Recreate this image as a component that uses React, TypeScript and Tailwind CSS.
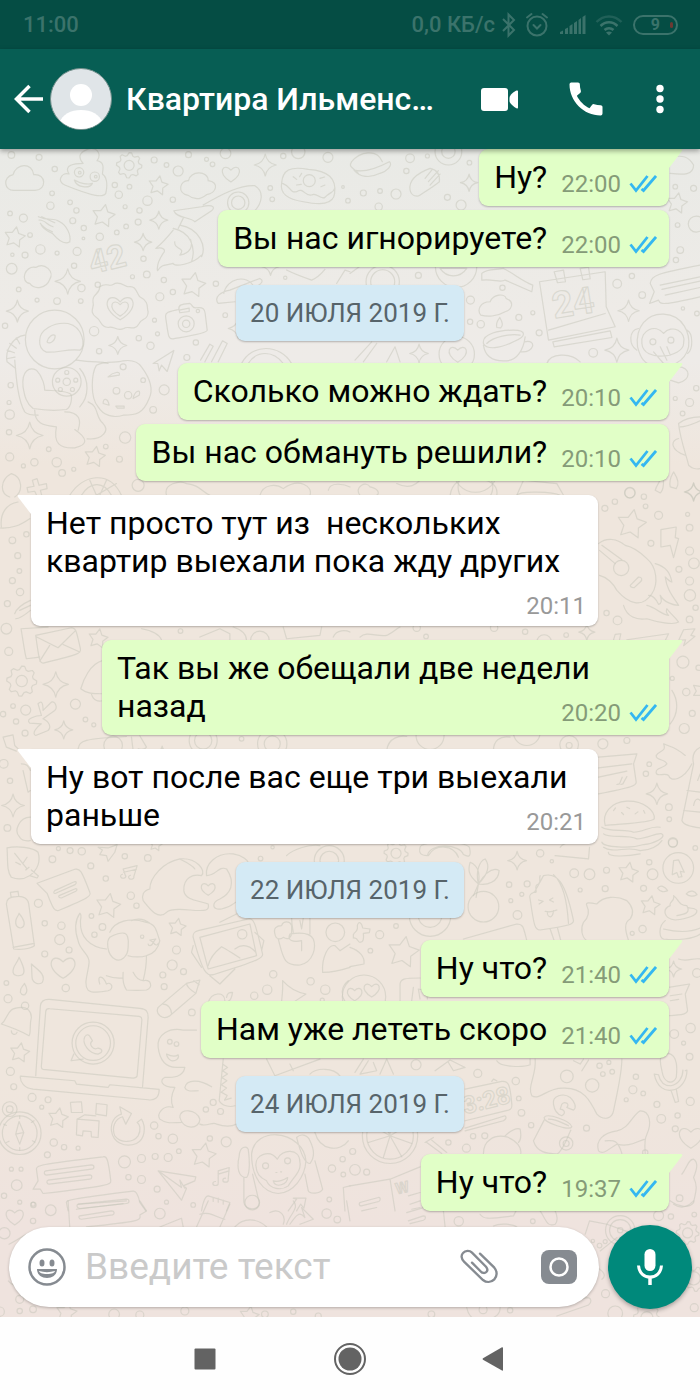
import React from 'react';
import { MdCall } from 'react-icons/md';

interface Message {
  text: string;
  time: string;
  mine?: boolean;
  first?: boolean;
}

interface Day {
  label?: string;
  groups: Message[][];
}

const days: Day[] = [
  {
    groups: [[
      { text: 'Ну?', time: '22:00', mine: true, first: true },
      { text: 'Вы нас игнорируете?', time: '22:00', mine: true },
    ]],
  },
  {
    label: '20 ИЮЛЯ 2019 Г.',
    groups: [
      [
        { text: 'Сколько можно ждать?', time: '20:10', mine: true, first: true },
        { text: 'Вы нас обмануть решили?', time: '20:10', mine: true },
      ],
      [{ text: 'Нет просто тут из  нескольких квартир выехали пока жду других', time: '20:11', first: true }],
      [{ text: 'Так вы же обещали две недели назад', time: '20:20', mine: true, first: true }],
      [{ text: 'Ну вот после вас еще три выехали раньше', time: '20:21', first: true }],
    ],
  },
  {
    label: '22 ИЮЛЯ 2019 Г.',
    groups: [[
      { text: 'Ну что?', time: '21:40', mine: true, first: true },
      { text: 'Нам уже лететь скоро', time: '21:40', mine: true },
    ]],
  },
  {
    label: '24 ИЮЛЯ 2019 Г.',
    groups: [[{ text: 'Ну что?', time: '19:37', mine: true, first: true }]],
  },
];

/* ---------- Wallpaper ---------- */

interface TileProps {
  x: number;
  y: number;
  dots: number[][];
  stars?: number[][];
  sparkles?: number[][];
  hearts?: number[][];
  gears?: number[][];
  paths?: string[];
  labels?: { x: number; y: number; size: number; turn: number; text: string }[];
}

const starPath = (cx: number, cy: number, r: number) => {
  const pts: string[] = [];
  for (let i = 0; i < 10; i++) {
    const a = ((i * 36 - 80) * Math.PI) / 180;
    const d = i % 2 ? r * 0.52 : r;
    pts.push(`${(cx + d * Math.cos(a)).toFixed(1)} ${(cy + d * Math.sin(a)).toFixed(1)}`);
  }
  return `M${pts.join('L')}Z`;
};

const sparklePath = (cx: number, cy: number, r: number) => {
  const k = r * 0.16;
  return `M${cx} ${cy - r}Q${cx + k} ${cy - k} ${cx + r} ${cy}Q${cx + k} ${cy + k} ${cx} ${cy + r}Q${cx - k} ${cy + k} ${cx - r} ${cy}Q${cx - k} ${cy - k} ${cx} ${cy - r}Z`;
};

const heartPath = (cx: number, cy: number, r: number) =>
  `M${cx} ${cy + r}C${cx - r * 1.9} ${cy - r * 0.1} ${cx - r * 0.9} ${cy - r * 1.5} ${cx} ${cy - r * 0.5}C${cx + r * 0.9} ${cy - r * 1.5} ${cx + r * 1.9} ${cy - r * 0.1} ${cx} ${cy + r}Z`;

const gearPath = (cx: number, cy: number, r: number) => {
  const pts: string[] = [];
  for (let i = 0; i < 32; i++) {
    const a = ((i * 11.25) * Math.PI) / 180;
    const d = i % 4 < 2 ? r : r * 0.78;
    pts.push(`${(cx + d * Math.cos(a)).toFixed(1)} ${(cy + d * Math.sin(a)).toFixed(1)}`);
  }
  return `M${pts.join('L')}Z`;
};

// Tiles are drawn on a grid three times finer than the chat itself
const tiles: TileProps[] = [
  {
    x: 0, y: 150,
    dots: [[35,15,10],[118,22,9],[165,57,8],[463,30,9],[500,45,7],[566,14,9],[535,63,15],[620,28,6],[638,43,7],[677,10,16],[850,18,8],[895,6,20],[984,22,15],[345,105,8],[357,134,11],[389,110,7],[376,170,6],[157,130,7],[152,167,11],[211,157,7],[230,181,8],[219,212,9],[252,234,8],[251,265,4],[31,190,7],[71,204,12],[91,255,7],[122,298,14],[172,309,6],[38,314,5],[76,315,9],[232,304,12],[300,260,11],[351,247,7],[379,229,7],[415,216,9],[419,181,8],[443,152,14],[519,149,8],[431,326,8],[36,356,16],[223,347,8],[57,418,7],[112,450,6],[172,453,10],[243,453,7],[245,414,11],[294,404,8],[398,380,6],[441,373,10],[492,390,8],[519,426,8],[480,440,12],[464,510,6],[473,551,6],[417,564,8],[452,587,11],[588,577,8],[283,543,14],[298,603,8],[16,527,8],[561,622,9],[648,401,8],[676,495,7],[856,383,5],[811,114,7],[817,148,7],[1029,111,4],[1044,152,7],[33,705,8],[28,757,6],[30,793,14],[28,846,8],[493,719,15],[460,779,10],[376,862,17],[318,889,7],[147,897,7],[104,936,11],[30,920,12],[71,947,6],[171,936,14],[187,968,10],[222,957,6],[359,927,9],[388,46,15],[715,158,32],[715,158,20],[165,568,88],[201,695,43],[201,695,11],[559,521,24],[559,521,11],[594,483,5],[238,67,14],[285,80,14],[240,68,4],[288,80,4],[928,92,18],[201,667,6],[228,690,6],[218,718,6],[182,718,6],[174,690,6],[385,735,11],[350,722,10],[430,690,7],[370,650,9]],
    stars: [[475,107,30],[311,198,35],[45,262,32],[580,405,38],[285,920,32]],
    sparkles: [[796,45,33],[477,210,27],[430,276,26],[204,394,38],[53,483,33],[354,586,27],[90,856,40],[812,350,26],[715,535,30]],
    hearts: [[693,72,24],[361,475,23],[361,473,36]],
    gears: [[388,46,38]],
    paths: [
      'M45 121C12 124 8 80 40 74C48 40 98 36 102 74C140 70 142 120 106 121Z',
      'M565 136C530 130 540 90 566 92C570 62 625 60 625 92C660 96 650 130 620 134C600 150 580 148 565 136Z',
      'M90 400C60 395 75 345 108 352C135 335 165 365 150 388C140 415 105 420 90 400Z',
      'M195 105C170 95 185 65 208 72C190 45 225 40 250 40C235 22 235 8 268 -4C295 -8 305 15 292 32C318 38 308 60 308 72C325 85 322 112 318 130C310 142 285 142 195 105ZM224 90C240 100 265 105 278 100C268 118 230 112 224 90Z',
      'M845 100C848 60 870 48 925 58C985 62 1010 85 1004 130C1000 165 960 165 910 155C862 148 840 130 845 100ZM848 100C875 110 870 130 890 125C910 110 915 140 935 135C950 125 960 150 975 142C990 125 1000 130 1004 115',
      'M880 80l10 8M905 70l-6 10M960 85l14-4M975 105l-12 5M890 105l14-2',
      'M118 210C135 208 145 228 160 230M122 220C135 240 150 240 158 245M116 200C150 215 160 200 180 215C200 225 215 255 210 275C195 285 175 270 158 250C145 245 128 235 122 220M126 200L165 218',
      'M522 182L605 170C645 160 645 175 635 182L585 215C570 200 530 205 522 182ZM610 165C670 130 720 105 765 107C795 125 785 160 765 182M540 225C600 235 620 290 605 320M520 235C570 245 590 290 575 335M535 235L550 205M520 240C500 265 480 285 468 295C490 290 500 300 490 310C480 325 470 345 473 362C485 340 505 345 520 340C525 350 575 345 605 315M525 275C520 300 560 290 540 315C570 310 580 290 572 268',
      'M300 410C320 395 330 412 340 403C360 390 375 410 385 410C410 405 410 430 420 440C450 455 440 475 445 485C445 510 425 505 418 520C405 545 385 525 372 535C350 545 340 525 325 532C300 530 305 510 290 502C265 485 285 470 280 458C275 430 300 435 300 410Z',
      'M497 498C497 485 510 484 537 478C535 462 550 462 570 460C580 465 575 475 590 473C610 470 615 478 616 490L622 540C622 550 540 562 520 566C505 568 506 560 497 498ZM538 480l30-6v10l-28 4z',
      'M460 640L522 601L502 664L485 645L478 662L474 640ZM602 630L630 582L640 588L615 635M635 635L668 572L682 580L655 635',
      'M120 570C120 540 160 515 205 520C250 530 260 590 240 600C200 595 180 608 140 606C125 600 118 590 120 570ZM142 575C145 560 160 550 166 556C168 570 150 585 142 575Z',
      'M75 555C40 560 15 600 22 635L48 655M22 600l22 8M30 580l20 14M50 563l10 18M24 625l22-4M45 630C50 690 55 750 75 785C85 795 100 795 115 795M70 710C65 660 90 650 110 660C130 680 135 710 135 720C160 722 190 720 210 730C220 735 215 770 200 778C170 782 130 780 100 775C80 760 75 740 70 710ZM105 780C105 820 130 825 170 830C160 880 180 895 225 893C265 885 265 865 225 838M195 785C240 785 245 810 235 840M265 755C300 770 285 800 310 820C330 840 310 870 262 866M230 630C290 640 300 630 325 640M240 655C270 690 268 740 240 770',
      'M290 645C320 630 350 640 370 632C400 628 415 635 425 650C455 690 460 720 448 745C430 790 410 795 370 795C340 805 310 795 295 770C270 740 275 670 290 645ZM325 680C340 665 365 662 358 675ZM310 760C310 740 325 745 328 765ZM400 745C405 720 425 715 418 735ZM348 768h25v6h-20z',
      'M672 430C680 385 740 370 762 410M655 460C640 440 665 425 690 420L780 385C800 395 770 410 755 418M655 460L705 455',
      'M860 360C890 375 920 385 935 390C950 385 965 370 975 358M1010 400L1035 360L1050 365M725 640C755 580 840 580 875 640M745 640C770 600 820 600 850 640',
    ],
    labels: [{ x: 277, y: 372, size: 96, turn: -14, text: '42' }],
  },
  {
    x: 350, y: 150,
    dots: [[180,25,13],[169,63,8],[232,18,6],[358,38,7],[40,129,9],[90,123,7],[138,132,15],[86,170,11],[333,165,15],[292,142,9],[205,376,9],[457,413,8],[506,502,9],[548,488,6],[567,548,9],[361,450,12],[360,515,8],[392,522,11],[801,401,13],[845,378,8],[876,435,10],[1040,490,7],[998,475,5],[729,608,13],[990,300,10],[977,330,8],[982,225,7],[1038,222,24],[975,110,7],[1030,115,9],[1018,757,12],[1038,714,8],[975,745,6],[997,790,7],[908,575,9],[962,570,9],[839,1028,15],[98,395,50],[98,395,36],[318,350,62],[320,612,53],[376,960,66],[376,1010,52],[295,5,40],[295,5,20]],
    stars: [[980,160,32]],
    sparkles: [[357,98,26],[835,482,32],[800,600,36],[207,610,28],[1030,1025,26]],
    hearts: [[323,612,24]],
    paths: [
      'M25 70C5 50 -5 50 5 35C30 5 80 -5 97 35M12 60C40 68 80 55 118 35C130 45 110 65 90 70C60 85 30 82 12 60Z',
      'M180 120C175 90 200 70 240 55C265 60 270 75 268 95C250 110 225 125 205 138C190 140 182 130 180 120ZM235 95L265 62M225 85L245 60M240 105L270 72',
      'M965 20C985 20 1010 10 1030 45C1030 75 1000 75 960 70',
      'M392 495C380 480 390 455 420 455C430 430 465 430 468 445C495 455 485 480 465 485C440 500 410 500 392 495Z',
      'M270 355C290 385 330 385 350 355ZM395 370C410 355 440 360 460 355C490 370 520 395 548 405L545 425L465 390C450 400 430 385 395 390Z',
      'M568 395L765 365L768 470L795 530L595 570ZM595 540L765 490M608 575L780 542L785 562L612 590ZM612 365l28-5l6 35l-24 3zM690 355l25-4l5 35l-22 3z',
      'M900 400C905 375 920 370 1050 345M898 460L912 425L900 400M898 460L925 450C930 465 940 465 1050 440M930 405L1050 380M935 418L1050 393M945 435L1050 412',
      'M400 580C395 550 450 540 490 540C530 540 530 560 490 575C450 595 410 600 400 580ZM400 585C405 620 430 635 470 632C500 630 520 600 525 560M523 575C560 565 555 610 510 605M410 580C430 560 480 550 510 555',
      'M440 532C436 515 445 510 449 502C455 512 462 525 452 533Z',
      'M862 590C855 530 890 490 940 492C1000 495 1020 550 1015 590C1005 635 960 655 920 650C880 645 870 620 862 590ZM875 580C870 540 915 520 940 550C965 520 1010 545 1000 580C1000 620 880 640 875 580ZM865 535C835 540 835 585 860 600M1010 540C1030 550 1028 600 1012 610M910 605L940 640M930 590L950 630M950 590L960 615',
      'M15 630L65 575M40 635L80 580M110 635L135 590L150 635M0 370L35 345M590 640C600 610 660 605 690 635M985 650C1020 650 1025 690 985 698L960 690',
      'M985 820C1010 800 1040 800 1050 800M985 820C990 870 1010 920 1015 945C1025 955 1040 958 1050 955M990 830C1010 830 1030 820 1050 812M985 865C960 870 960 900 1005 915',
      'M915 1020C920 1000 935 990 932 975C945 985 940 1020 930 1028ZM960 1010C955 985 965 975 970 965C980 980 990 1000 978 1015Z',
      'M30 1035C10 1010 50 990 60 1010C85 1015 90 1030 80 1035M140 1000C180 1020 200 1000 210 990M500 1035L520 990L620 1000L640 1035',
    ],
    labels: [{ x: 612, y: 505, size: 110, turn: -9, text: '24' }],
  },
  {
    x: 0, y: 480,
    dots: [[38,180,10],[54,226,9],[80,162,8],[59,272,7],[38,301,9],[61,335,11],[23,370,9],[20,445,16],[27,513,12],[40,677,7],[10,701,8],[78,689,15],[49,723,8],[227,671,15],[257,717,7],[282,733,6],[76,758,9],[12,850,13],[31,901,8],[23,1042,10],[66,602,17],[415,15,18],[542,452,7],[610,780,42],[610,780,26],[817,790,44],[817,790,24],[340,795,28],[725,775,7],[780,480,28]],
    stars: [[295,475,30]],
    sparkles: [[168,612,38],[192,748,27],[40,975,34],[487,815,18]],
    gears: [[66,602,45]],
    paths: [
      'M30 50C0 40 0 0 35 -20C70 -10 70 35 45 50M5 140C0 100 20 70 55 65M0 143C40 145 60 135 90 115',
      'M112 -5L118 15L140 10L142 25L122 30L126 45L112 48L105 33L85 36L82 22L103 18L98 0ZM210 45C250 -20 330 -30 365 45M245 45C270 5 310 0 335 45M290 45L270 0M300 45L320 0M290 45L350 10',
      'M108 465L215 442C230 442 230 455 242 505C245 520 235 522 130 548C120 548 118 540 108 465ZM108 468L175 502L228 450M120 542L150 495M240 515L190 492M64 445L145 440M64 445C70 480 75 520 80 535L120 530',
      'M45 400C50 385 70 370 92 360M48 415C60 415 80 400 92 390M60 390L92 375',
      'M243 625C250 600 270 550 310 540M243 625C260 640 280 640 310 640M275 640C280 660 295 665 310 660',
      'M115 670C125 660 130 665 130 690L155 665C165 660 175 680 165 690L130 715C150 725 155 740 145 750L108 765C95 760 110 740 125 730L90 728C75 715 110 705 125 705Z',
      'M10 770L40 763L45 795L60 810M10 770L20 800L50 812M65 850C80 850 85 855 92 870M70 870L85 935L92 930M92 1010C60 1010 40 1050 60 1070C70 1085 90 1080 92 1080',
      'M235 805C240 780 250 775 380 768M395 770L400 810M420 766L440 800C435 808 425 808 415 805M600 470L660 445L690 460L690 478M700 440C730 450 740 465 740 480M425 445C460 450 480 465 485 478M500 45C490 10 540 0 560 10C600 15 600 30 630 45M780 45C790 10 830 10 850 25C900 -10 940 20 930 45M985 30C990 0 1040 15 1050 20M850 440L860 475L960 465L965 440M1000 470C1010 445 1040 450 1050 455',
    ],
  },
  {
    x: 350, y: 480,
    dots: [[839,37,16],[881,49,8],[886,78,7],[764,84,9],[794,64,8],[925,105,12],[902,189,9],[1012,102,6],[1018,142,10],[1018,212,12],[1031,249,16],[986,267,9],[1018,302,12],[1019,345,17],[1036,382,8],[802,420,13],[769,398,8],[1018,417,10],[813,263,23],[998,545,18],[1045,562,8],[966,594,6],[1008,635,11],[1026,699,9],[1002,744,15],[758,790,15],[830,780,9],[897,851,7],[887,880,8],[956,980,10],[968,1085,14],[957,1016,7],[200,442,11],[228,468,7],[432,442,11],[525,454,8],[648,464,7],[582,485,22],[657,793,28],[657,795,9],[530,755,40],[240,765,42]],
    stars: [[844,132,45]],
    sparkles: [[1030,35,28],[920,940,32],[710,455,24]],
    paths: [
      'M932 148L978 140L975 172L985 175L970 232L960 195L932 200Z',
      'M745 190C770 170 800 175 825 195C850 200 870 215 890 235C920 260 925 310 905 340C875 385 835 370 800 330C790 310 770 290 748 285M748 210L795 250M755 195L815 238M840 315L865 290C875 290 878 298 870 305L852 322C845 322 840 320 840 315Z',
      'M915 250C950 260 960 280 965 305C960 305 955 300 945 290C950 330 970 350 985 375C970 375 940 365 930 345C935 360 935 370 925 372C915 350 905 345 895 345M820 375C830 410 860 420 890 415C920 425 970 435 985 425C975 410 960 400 950 385C945 395 950 400 955 405C930 400 915 380 890 375',
      'M1000 448L1034 445L1022 465L1034 468L1000 496L1006 478L985 480ZM830 478L955 460L945 480M790 478L795 462L812 460L808 478',
      'M745 830L860 820L850 850L858 905C858 915 850 920 745 940M745 862L845 850M745 890L830 872M800 912l8-2l8-20M812 912l6-2l12-22M820 890',
      'M765 1035C755 1000 780 965 830 962C880 960 915 990 912 1015C900 1028 800 1030 765 1035ZM755 1040C775 1055 830 1045 850 1055C880 1055 900 1035 930 1040M760 1060C780 1075 830 1060 860 1075C890 1075 920 1055 935 1060C950 1070 910 1090 880 1092C840 1105 760 1100 755 1085M790 990l6-8M830 980l8 4M855 1000l8-6M880 990l4 8M820 1002l-6-6',
      'M940 790C960 800 970 795 1005 825M940 790C950 815 925 810 918 825C915 840 945 835 950 850C940 865 915 860 918 878C920 890 945 875 955 885C960 905 1000 900 1025 850M1050 800C1030 810 1025 830 1030 850L995 1020C1000 1035 1030 1040 1050 1042M1010 930L1050 935M1000 990L1050 995M1042 900L1050 880M1030 975C1035 950 1045 955 1050 960',
      'M1030 615L1050 618M1030 615L1038 632L1030 645L1050 645M965 630C985 660 985 700 960 730M30 470C50 450 80 470 110 465C140 450 145 440 150 440M110 810C115 770 150 765 170 768M430 810C430 780 450 765 480 770',
      'M300 45C305 10 330 -10 370 -5C420 -5 445 15 440 45M500 45C510 30 610 35 630 45',
    ],
  },
  {
    x: 0, y: 840,
    dots: [[158,56,10],[176,24,6],[211,30,9],[246,32,11],[375,47,8],[444,52,10],[273,76,9],[318,114,8],[393,165,11],[410,195,8],[116,188,12],[185,255,11],[135,248,8],[180,297,15],[135,340,9],[208,328,9],[275,226,7],[308,259,10],[284,282,8],[530,328,12],[517,373,15],[551,393,9],[489,403,9],[493,438,9],[198,442,11],[20,427,7],[25,474,12],[576,515,10],[32,692,12],[42,738,9],[97,770,12],[145,777,9],[126,799,6],[162,905,11],[193,919,8],[235,922,6],[143,942,9],[463,854,11],[476,886,8],[519,894,14],[374,963,18],[425,953,12],[466,947,9],[505,950,12],[537,931,7],[386,1009,8],[425,1016,12],[472,1045,9],[679,903,15],[630,893,8],[35,985,6],[64,985,6],[51,1033,16],[13,1065,8],[100,1090,6],[60,1084,6],[996,983,11],[1028,955,8],[1030,1001,7],[988,1076,7],[500,1084,6],[820,401,11],[802,447,14],[763,465,11],[932,422,11],[976,447,14],[967,478,6],[782,54,7],[640,785,9],[618,806,8],[662,812,9],[280,607,63],[280,607,52],[60,877,64],[60,877,52],[30,805,22],[30,805,10],[727,281,14],[988,60,45],[988,60,28],[1006,275,28],[510,603,7],[530,610,7],[427,288,5],[797,975,9],[863,960,9],[76,495,11],[818,20,5]],
    stars: [[325,196,38],[532,260,27],[60,636,30],[175,832,31],[611,944,38],[468,12,20]],
    hearts: [[190,380,33],[625,145,19]],
    paths: [
      'M22 22C50 15 100 20 115 35C125 70 110 90 90 105L112 112L116 106L95 88M22 22C25 60 20 90 35 110C55 118 75 115 90 105M45 38L82 85M82 50L70 68M48 65L62 72M78 88L88 80',
      'M112 128L225 86C240 82 245 88 270 155C275 165 270 170 180 208C165 215 160 205 142 158ZM165 150L222 124C230 120 232 128 226 132L168 158C162 160 160 155 165 150ZM178 165L225 145C232 142 234 148 228 152L185 172C178 172 175 168 178 165Z',
      'M34 168L32 155L55 152L57 166M20 190C20 172 35 168 50 168C72 165 85 175 87 190L104 315C90 325 60 328 42 325ZM40 320L104 308M50 255C42 235 55 230 58 218C72 235 80 250 68 260C60 265 54 260 50 255Z',
      'M40 395C38 375 52 370 58 350C68 370 80 395 68 402C55 408 42 405 40 395ZM95 370C110 385 140 400 128 425C115 435 98 425 97 410ZM62 455C60 440 70 438 74 428C82 440 85 455 75 462C68 464 64 460 62 455Z',
      'M68 500C80 500 95 510 95 530C88 555 95 575 88 585C65 572 35 560 5 550C20 540 20 520 35 508C45 500 55 500 68 500ZM35 570C35 582 48 585 52 575',
      'M370 85L412 75L402 108M370 85L378 108M372 95L410 86M378 105a8 6 0 1 1-10-4M402 108a8 6 0 1 1-10-4M295 20L325 22L352 12L345 35L325 62L320 45L300 42L308 28Z',
      'M430 180C425 165 430 150 450 145C450 110 490 65 540 55C590 50 620 90 605 105C580 100 550 110 552 150C555 180 600 180 625 190C630 210 620 212 570 208C540 205 510 205 500 215C475 240 450 205 430 180ZM540 55C560 65 580 75 585 85',
      'M620 105C615 70 650 35 700 40C730 45 745 60 745 68M620 105C650 105 655 75 680 85C710 130 690 160 660 175C635 185 635 210 665 205C690 200 700 190 707 185',
      'M240 218C225 240 225 270 235 300C240 330 270 340 268 365C265 400 250 430 265 448C275 458 300 455 325 450C345 445 335 420 320 430C310 405 290 400 300 430M320 325C270 320 240 290 242 240C245 225 245 220 240 218M330 275C345 240 390 230 440 245C470 250 470 275 480 300C475 325 460 340 440 345C425 350 400 350 385 345M385 320C385 350 360 365 345 355C320 340 320 300 330 290C345 280 365 275 375 278C390 285 385 310 385 320ZM440 345C440 380 435 400 430 420C455 415 460 440 440 448C415 450 405 450 380 448C365 425 370 410 370 395M320 405C345 415 360 412 370 412M430 420C415 420 405 405 400 395M450 298L468 295L460 305ZM460 305C455 320 445 315 445 310M460 305C468 318 475 312 475 308M395 240C420 230 440 240 450 248',
      'M580 290C578 280 585 272 595 270L745 235C760 232 765 238 788 340C790 350 785 358 640 402C620 405 610 400 580 290ZM600 290L750 250L770 345L625 385ZM625 375C630 350 650 330 665 318C680 325 700 340 720 352M705 325C725 310 745 310 768 335M580 315L575 335L605 380M765 275L792 300L785 330M630 405L660 430L705 385M660 245L710 220',
      'M825 280C820 262 830 255 845 255C850 240 870 240 875 255L875 275M825 280C828 300 845 295 850 290C865 300 875 290 875 275M835 295C850 350 850 375 900 373C940 365 950 320 940 295C930 275 900 275 870 280C860 300 880 305 905 300L905 330M880 275C875 250 875 235 875 230M900 240L905 265L910 232M930 232L930 280',
      'M968 395C965 350 985 310 1005 315L1020 330L1050 310M968 395C990 395 1020 390 1050 380M848 420C850 450 845 475 845 485M848 420C870 445 890 455 918 460L880 485M1045 420C1020 440 1025 465 1035 482',
      'M475 500L560 428L600 418L588 458L510 525C490 540 465 520 475 500ZM560 428C560 440 575 450 588 458M490 490C505 490 515 505 515 518M582 420L598 432M625 485C635 455 675 450 675 480M680 470C682 455 690 455 698 455C695 475 690 480 685 482',
      'M108 705L122 495C124 480 135 475 150 476L420 503C440 505 445 512 445 530L428 740M125 675L138 512C139 505 142 503 150 504L418 527C425 528 427 532 426 540L412 705C410 712 405 712 400 712L130 686C125 685 124 682 125 675ZM62 706L225 720L230 730L325 740L330 732L478 746C478 770 465 780 445 777L100 745C75 742 60 725 62 706Z',
      'M222 640L214 660L250 655M255 588C265 575 270 585 278 600C265 610 280 630 295 622C310 625 310 635 295 640C270 640 245 610 255 588Z',
      'M48 880L58 842L72 875L60 910ZM48 880L72 875M12 850l8 4M95 845l8-5M20 905l8-4M98 900l8 4M60 825v8M60 920v8',
      'M212 785L245 783L248 815L215 815ZM290 788L322 792L320 825L288 820ZM255 822L288 825M232 835L255 822M230 882L232 835L298 840L295 890L275 888L274 872L250 870L248 885Z',
      'M360 798L395 818L378 850L368 828C345 835 335 860 345 885C365 910 400 905 415 885C425 865 420 850 412 845L425 835C440 860 435 895 410 908C375 922 340 905 335 870C332 845 345 825 365 820Z',
      'M100 1045L115 1020L110 985C110 975 115 970 310 948C320 945 325 950 333 1020C334 1030 330 1035 130 1058L122 1045ZM138 990L275 972C285 972 285 985 275 985L140 1003C132 1002 132 992 138 990ZM145 1018L270 1002C278 1002 278 1014 270 1015L148 1030C140 1030 140 1020 145 1018ZM205 1110L200 1085C200 1078 205 1075 400 1051C410 1050 415 1060 420 1085L438 1110M235 1090L380 1075C390 1075 390 1087 380 1088L240 1103C230 1102 230 1092 235 1090Z',
      'M475 990L588 1008L585 1020L550 1035L560 1042L545 1078ZM475 990L545 1040L540 1018L555 1042M655 1025L655 990L688 980L685 1015M655 1000L688 990M655 1028a8 6 0 1 1-8-6M685 1018a8 6 0 1 1-8-6M605 1110C610 1080 615 1065 625 1065L690 1085L680 1110M640 1070v12M655 1072v12M670 1078v12',
      'M475 620C470 580 510 560 550 568L590 568M475 620C480 660 500 680 530 680L555 680C550 710 520 710 495 710C480 715 480 740 525 740C510 770 515 790 520 800C490 790 470 820 480 835C500 850 520 845 545 845M500 640C510 645 525 650 535 642C540 655 525 662 515 660C505 655 502 650 500 640ZM555 740C560 715 600 715 635 738M555 740C560 755 580 750 595 750M540 830C540 800 590 805 600 835C600 865 550 870 540 830ZM600 850C620 860 640 840 650 850C680 860 700 855 710 850M670 655L658 780C665 795 690 800 705 795M668 670l15 10l-15 10l15 10l-17 10l15 10l-17 12l16 10l-16 12l18 10l-8 14l20-6',
      'M755 940C760 895 800 880 830 882C880 885 915 920 918 960C915 1010 880 1055 835 1058C790 1055 755 1010 755 940ZM768 975C765 940 810 925 832 955C845 925 900 920 900 965C905 990 880 1010 865 1035C845 1050 810 1045 800 1020C780 1010 770 1000 768 975ZM820 1020C835 1025 850 1018 863 1010C865 1030 825 1045 820 1020ZM828 995h3M842 993h3M718 945C720 915 740 915 745 925C750 960 750 1000 740 1010C715 1010 710 980 718 945ZM732 1010L732 1085C735 1110 780 1110 778 1085L758 1000M890 890C905 875 925 885 930 900C945 930 945 950 930 968C910 970 895 910 890 890ZM945 960L968 1045C960 1060 930 1060 925 1050L915 1000',
      'M865 1110L890 1075L880 1072L918 1072L912 1102L902 1090L890 1110M1050 1035L1030 1040L1035 1110M800 655L825 705L960 655M870 670L880 690M930 700C950 680 1000 680 1020 705M945 875C960 930 1020 935 1045 900M860 45C880 25 930 10 960 15',
    ],
  },
  {
    x: 350, y: 840,
    dots: [[570,38,11],[605,62,5],[672,98,13],[718,101,16],[769,89,9],[765,144,9],[690,148,6],[897,65,8],[907,101,16],[880,143,9],[968,7,13],[1035,22,7],[477,132,8],[531,130,9],[515,161,6],[482,180,6],[502,223,13],[89,282,12],[138,256,7],[61,330,7],[877,265,11],[846,278,6],[198,672,15],[383,698,12],[497,721,11],[506,773,7],[514,816,10],[543,853,8],[650,707,19],[726,734,20],[748,675,8],[776,665,6],[786,693,7],[758,700,7],[857,708,8],[848,747,12],[828,777,6],[879,758,7],[920,791,9],[933,834,13],[975,864,9],[982,824,8],[1020,782,12],[1018,648,10],[1021,562,14],[972,580,13],[1000,607,6],[709,862,9],[404,885,9],[369,886,8],[349,922,12],[295,905,8],[8,932,9],[15,987,16],[50,994,9],[885,935,8],[984,82,46],[138,38,15],[400,198,46],[240,225,62],[240,225,35],[120,885,83],[120,885,70],[648,908,20],[648,908,9],[42,468,65],[988,1072,10],[1040,397,13]],
    stars: [[160,335,48],[834,96,31],[900,195,30]],
    sparkles: [[501,60,28],[970,385,24]],
    hearts: [[65,448,21],[14,460,20],[1022,890,32]],
    gears: [[138,38,36]],
    paths: [
      'M370 165L385 130C350 100 355 85 360 65C385 75 390 100 385 130C375 90 390 60 405 55C420 75 415 100 385 130C410 90 430 80 447 90C445 125 410 135 385 130L378 170M210 20C215 0 340 0 358 20C365 50 355 50 340 42C330 10 240 5 232 45C215 45 205 40 210 20ZM235 45C255 10 310 10 325 50',
      'M553 155L580 105C620 95 645 120 670 240C670 250 660 255 570 268C555 268 552 260 540 175C535 160 545 160 550 155C570 160 545 135 565 130C575 120 565 115 570 105M610 102C640 130 650 180 655 248M565 178l14 4l-12 8M608 172l-10 6l12 6M585 212C595 215 610 212 620 208M592 213C590 230 608 238 610 210M600 265L612 300M622 262L632 300',
      'M710 195C705 185 715 185 740 190C760 165 800 165 830 180C850 200 850 220 840 235C820 245 825 270 835 300M710 195C720 215 715 230 700 245C690 265 695 290 710 300',
      'M10 282C15 270 25 275 22 255C25 240 35 245 38 262L60 265L58 276L40 278C42 295 40 305 30 305C22 305 25 290 10 292ZM0 320C30 330 45 350 42 370L0 378',
      'M985 58L1002 95L990 92L995 108L985 110L980 96L966 102L970 60ZM960 195C955 180 975 185 970 165C985 175 985 195 1010 195C1020 215 1010 220 980 225M960 195C935 205 940 235 975 238C1010 235 1040 225 1040 210C1035 200 1020 205 1012 200M945 240C925 255 925 290 940 295C980 300 1030 295 1050 280M940 265C980 275 1020 275 1050 262M922 143C930 130 945 138 952 150C940 156 928 152 922 143ZM1008 160C1020 145 1035 152 1040 162C1030 168 1015 168 1008 160Z',
      'M760 20C790 40 830 15 870 30C900 30 925 15 935 0M775 35C770 50 830 48 870 40M630 20C650 -5 690 10 720 5M615 45L715 55L718 20M340 295L500 250C520 250 520 260 530 300M150 480L150 430C152 415 160 412 210 412M185 480L190 440M210 475L205 445L230 450L232 475M985 355C1010 365 1030 350 1050 355',
      'M955 440L1018 430L1005 460L1012 510C1010 520 1000 522 955 525M960 465L995 460M960 480L985 476M935 690C925 650 930 640 955 638C985 645 980 690 978 710C965 735 940 725 935 690ZM912 700C920 740 945 752 965 748C990 745 1010 720 1010 690M925 702C930 725 945 735 962 735C985 730 998 710 998 688M962 748L975 785L985 782L978 745M1005 690L1010 688M912 700L925 702',
      'M555 655C560 700 530 740 545 765C570 780 590 740 640 742C700 740 720 780 740 820C760 840 785 835 790 810C800 760 815 700 815 655M670 660l20 10l10-15M695 690L715 658M610 790C605 765 640 755 660 770C675 785 680 800 670 808L650 800C660 790 645 780 635 790L630 805C640 805 650 815 635 825C620 820 612 805 610 790Z',
      'M345 745L455 722C475 720 480 730 485 790C486 800 485 805 475 808L345 840M425 722L430 715L440 720M345 862L465 825C470 830 468 835 460 840L345 870',
      'M582 830C590 815 660 840 665 858C660 872 580 845 582 830ZM582 838L550 900C560 935 590 938 620 940C640 930 655 880 662 868M595 835C620 835 640 848 655 855M745 930C735 900 760 875 800 870C840 860 840 830 870 810C900 810 905 850 890 880C880 900 885 930 885 938M745 930C760 945 780 920 800 910C840 920 860 900 885 895M765 900C785 900 800 890 815 938',
      'M400 938C400 900 430 880 470 888C500 900 515 920 512 938M465 885C480 870 500 860 510 865C515 890 510 900 505 905M230 905L275 938M245 898L290 935M225 905L250 890M120 885L120 815M120 885L60 850M120 885L55 905M120 885L100 950M120 885L155 948M120 885L185 908M120 885L178 850M120 885L90 820',
      'M0 1035L120 1015L210 978M120 1015L135 1110M180 1090L210 1080M175 1065L210 1055M185 1105L210 1100M30 1085L85 1070C92 1068 92 1080 86 1082L34 1095C28 1096 26 1088 30 1085ZM35 1110L80 1100M995 1000C1010 980 1015 955 1030 955C1045 965 1040 985 1030 1010C1045 1040 1035 1055 1030 1085C1015 1105 980 1095 960 1080M40 655L15 695M55 660L30 700L80 690L70 665M90 700L110 655L130 700M255 690L300 658L345 680L310 690L295 665M440 660C450 680 520 680 540 672L540 655',
    ],
    labels: [{ x: 345, y: 820, size: 72, turn: -14, text: '3:28' }, { x: 140, y: 1060, size: 46, turn: -12, text: 'W' }],
  },
  {
    x: 0, y: 1200,
    dots: [[14,97,17],[100,60,8],[153,28,16],[101,12,8],[480,38,16],[580,12,7],[980,38,14],[1012,56,10],[757,5,22],[60,330,8],[0,332,14],[343,340,16],[100,325,10],[420,342,12],[555,330,12],[795,340,10],[60,295,12],[880,332,8],[955,345,9]],
    stars: [[200,335,32],[748,345,30]],
    hearts: [[45,48,24]],
    paths: [
      'M205 0L210 78M235 10L380 0M240 45L335 30C345 30 345 40 338 42L245 55C236 54 236 46 240 45ZM230 25L370 8M420 0L440 30L420 42C425 60 415 62 260 78M590 78L625 0M660 78L690 10M600 40C630 30 650 50 675 55M480 78L545 52L550 78M705 78C730 50 770 50 800 78M810 35C840 20 860 45 850 70M860 70C870 40 900 20 880 0M870 70C890 40 900 30 915 50L905 20L940 55L900 70M1040 0L1050 60M28 130C50 120 60 110 80 100M26 240C40 260 60 250 75 280',
    ],
  },
  {
    x: 400, y: 1200,
    dots: [[176,61,14],[398,61,7],[775,44,15],[812,47,8],[882,41,7],[616,278,12],[645,337,22],[882,320,12],[740,350,18],[660,88,44],[660,88,32],[660,88,8],[862,96,15],[598,134,7],[615,122,6],[94,340,10],[330,328,8],[249,326,12],[578,120,5],[880,232,20]],
    gears: [[862,96,34],[740,350,40],[890,235,36]],
    paths: [
      'M568 60L620 70L690 95M568 60L555 100M600 150L650 110M130 30L135 78M20 35L70 20M25 60L70 45C78 45 78 55 70 58L30 68M240 40C250 55 260 55 340 45L350 25M420 30C440 60 440 78 465 70C475 60 470 40 465 30M280 75C300 65 340 70 350 78M480 310L560 290C575 290 575 305 565 312L470 345M200 320C205 350 240 380 280 350C300 340 300 325 300 320M590 200C610 210 620 225 605 235M820 10C850 30 870 10 880 0',
    ],
  },
];

const Wallpaper: React.FC = () => (
  <svg
    className="absolute inset-0 h-full w-full"
    viewBox="0 149 700 1167"
    preserveAspectRatio="xMidYMin slice"
    fill="none"
    stroke="#c5c6ba"
    strokeOpacity="0.5"
    strokeWidth="3.5"
    strokeLinecap="round"
    strokeLinejoin="round"
    aria-hidden="true"
  >
    {tiles.map((t) => (
      <g key={`${t.x}-${t.y}`} transform={`translate(${t.x} ${t.y}) scale(0.3333)`}>
        {t.dots.map(([cx, cy, r], i) => <circle key={i} cx={cx} cy={cy} r={r} />)}
        {t.stars?.map(([x, y, r], i) => <path key={i} d={starPath(x, y, r)} />)}
        {t.sparkles?.map(([x, y, r], i) => <path key={i} d={sparklePath(x, y, r)} />)}
        {t.hearts?.map(([x, y, r], i) => <path key={i} d={heartPath(x, y, r)} />)}
        {t.gears?.map(([x, y, r], i) => <path key={i} d={gearPath(x, y, r)} />)}
        {t.paths?.map((d, i) => <path key={i} d={d} />)}
        {t.labels?.map((l) => (
          <text key={l.text} x={l.x} y={l.y} fontSize={l.size} fontWeight="700" transform={`rotate(${l.turn} ${l.x} ${l.y})`}>{l.text}</text>
        ))}
      </g>
    ))}
  </svg>
);

/* ---------- Bars ---------- */

const StatusBar: React.FC = () => (
  <div className="flex h-[49px] items-center justify-between bg-[#054d44] pl-[23px] pr-[22px] text-[22px] font-medium leading-7 text-[#3b736b]">
    <span>11:00</span>
    <div className="flex items-center">
      <span>0,0 КБ/с</span>
      <svg className="ml-1.5" width="16" height="26" viewBox="0 0 16 26" fill="none" stroke="currentColor" strokeWidth="2" aria-hidden="true">
        <path d="M2 7L13 18L7.500 23.500V2.500L13 8L2 19" />
      </svg>
      <svg className="ml-2" width="24" height="26" viewBox="0 0 24 26" fill="none" stroke="currentColor" strokeWidth="2" strokeLinecap="round" aria-hidden="true">
        <circle cx="12" cy="14" r="9.500" />
        <path d="M8.500 13L12 16.500L15.500 13M2 5.500L6.500 2M22 5.500L17.500 2" />
      </svg>
      <svg className="ml-2.5" width="28" height="22" viewBox="0 0 28 22" fill="currentColor" aria-hidden="true">
        <path d="M1 20V18L4 16.500V20ZM6 20V15L9 13.500V20ZM10.500 20V12L13.500 10V20ZM15 20V9L18 7V20ZM19.500 20V6L22 4V20ZM23.500 20V3L26.500 1V20Z" />
      </svg>
      <svg className="ml-2" width="28" height="22" viewBox="0 0 28 22" fill="none" stroke="currentColor" strokeWidth="2.500" aria-hidden="true">
        <path d="M1.500 8C8.500 0.500 19.500 0.500 26.500 8" opacity="0.5" />
        <path d="M5.500 12C10.500 7 17.500 7 22.500 12" />
        <path d="M9.500 16C12 13.500 16 13.500 18.500 16" />
        <path d="M11 18.500C13 17 15 17 17 18.500L14 21.500Z" fill="currentColor" stroke="none" />
      </svg>
      <div className="ml-2.5 flex h-5 w-[45px] items-center justify-end gap-2.5 rounded-full border-2 border-current pr-[3px]">
        <span className="text-base font-bold leading-4">9</span>
        <span className="h-1.5 w-[3px] rounded-full bg-[#6b3a33]"></span>
      </div>
    </div>
  </div>
);

const ChatHeader: React.FC = () => (
  <header className="relative z-10 flex h-[100px] items-center bg-[#075e54] pl-3 text-white shadow-[0_2px_5px_rgba(0,0,0,0.35)]">
    <button type="button" aria-label="Назад" className="flex items-center">
      <svg width="34" height="34" viewBox="0 0 34 34" fill="none" stroke="currentColor" strokeWidth="3.500" aria-hidden="true">
        <path d="M31 17H5M17.500 4L4.500 17L17.500 30" />
      </svg>
    </button>
    <svg className="ml-1" width="62" height="62" viewBox="0 0 62 62" role="img" aria-label="Фото контакта">
      <clipPath id="avatar"><circle cx="31" cy="31" r="30" /></clipPath>
      <circle cx="31" cy="31" r="30.500" fill="#e0e5e8" stroke="#73908c" />
      <g clipPath="url(#avatar)" fill="#fff">
        <circle cx="31" cy="27" r="11" />
        <path d="M9 56C12 46 21 42 31 42C41 42 50 46 53 56V64H9Z" />
      </g>
    </svg>
    <h1 className="ml-3.5 min-w-0 flex-1 truncate text-[32px] font-medium leading-10">Квартира Ильменс…</h1>
    <button type="button" aria-label="Видеозвонок" className="mr-11">
      <svg width="40" height="28" viewBox="0 0 40 28" fill="currentColor" aria-hidden="true">
        <rect x="1" y="3" width="27" height="23" rx="3" />
        <path d="M29.500 13C29.500 10 34 6.500 36.500 5.500C37.500 5.300 38 5.500 38 6.500V22.500C38 23.500 37.500 23.700 36.500 23.300C34 22 29.500 18.500 29.500 16Z" />
      </svg>
    </button>
    <button type="button" aria-label="Позвонить" className="mr-[46px]">
      <MdCall className="h-11 w-11" />
    </button>
    <button type="button" aria-label="Ещё" className="mr-[34px]">
      <svg width="12" height="34" viewBox="0 0 12 34" fill="currentColor" aria-hidden="true">
        <circle cx="6" cy="6.500" r="3.700" />
        <circle cx="6" cy="17" r="3.700" />
        <circle cx="6" cy="27.500" r="3.700" />
      </svg>
    </button>
  </header>
);

/* ---------- Messages ---------- */

const Ticks: React.FC = () => (
  <svg className="ml-2" width="28" height="28" viewBox="0 0 28 28" fill="none" stroke="#34b7f1" strokeWidth="2.800" aria-label="Прочитано" role="img">
    <path d="M1.500 13.500L7 20.500L18.500 6M12.500 19L14.500 20.500L27 6" />
  </svg>
);

const Bubble: React.FC<{ message: Message }> = ({ message }) => {
  const { text, time, mine, first } = message;
  const corner = !first ? '' : mine ? 'rounded-tr-none' : 'rounded-tl-none';

  return (
    <div className={`flex ${mine ? 'justify-end' : 'justify-start'}`}>
      <div className={`relative max-w-[567px] rounded-[9px] pb-2.5 pl-[15px] pr-3 pt-[9px] shadow-[0_1px_2px_rgba(0,0,0,0.25)] ${corner} ${mine ? 'bg-[#e1ffc7]' : 'bg-white'}`}>
        {first && (
          <svg
            className={`absolute top-0 ${mine ? 'left-full' : 'right-full -scale-x-100'}`}
            width="14" height="20" viewBox="0 0 14 20" fill={mine ? '#e1ffc7' : '#fff'} aria-hidden="true"
          >
            <path d="M0 0H12C13.500 0 13.500 1 13 2L0 19Z" />
          </svg>
        )}
        <p className="flow-root whitespace-pre-wrap text-[32px] leading-[38px] text-black">
          {text}
          <span className={`float-right ml-3.5 flex h-9 pt-3 text-2xl leading-7 ${mine ? 'text-[#859b78]' : 'text-[#999]'}`}>
            {time}
            {mine && <Ticks />}
          </span>
        </p>
      </div>
    </div>
  );
};

const DateChip: React.FC<{ label: string }> = ({ label }) => (
  <div className="mb-[22px] mt-[18px] flex justify-center">
    <span className="rounded-[9px] bg-[#d4eaf5] px-3.5 pb-3 pt-[13px] text-[26px] leading-[31px] text-[#57646a] shadow-[0_1px_2px_rgba(0,0,0,0.25)]">{label}</span>
  </div>
);

const Composer: React.FC = () => (
  <form className="relative flex items-center gap-[9px] pb-2 pl-[9px] pr-2 pt-3.5">
    <div className="flex h-20 min-w-0 flex-1 items-center rounded-full bg-white pl-[18px] pr-5 text-[#868b91] shadow-[0_1px_3px_rgba(0,0,0,0.25)]">
      <button type="button" aria-label="Эмодзи">
        <svg width="40" height="40" viewBox="0 0 40 40" fill="none" aria-hidden="true">
          <circle cx="20" cy="20" r="17.500" stroke="currentColor" strokeWidth="2.500" />
          <ellipse cx="15" cy="16" rx="2.500" ry="3.500" fill="currentColor" />
          <ellipse cx="25" cy="16" rx="2.500" ry="3.500" fill="currentColor" />
          <path d="M10 22H30C30 28 25.500 31 20 31C14.500 31 10 28 10 22Z" fill="currentColor" />
          <path d="M12 24C17 25.500 23 25.500 28 24C27.500 26 25 27 20 27C15 27 12.500 26 12 24Z" fill="#fff" />
        </svg>
      </button>
      <input
        type="text"
        aria-label="Введите текст"
        placeholder="Введите текст"
        className="ml-[18px] h-12 min-w-0 flex-1 bg-transparent text-[37px] text-black outline-none placeholder:text-[#cacaca]"
      />
      <button type="button" aria-label="Прикрепить">
        <svg width="40" height="40" viewBox="180 140 120 120" fill="none" stroke="currentColor" strokeWidth="7" strokeLinecap="round" aria-hidden="true">
          <path d="M243 160L286 202C296 213 294 229 286 237C276 247 262 247 252 239L195 184C186 175 186 164 192 158C199 150 212 150 219 157L261 199C266 205 266 211 262 215C258 219 250 219 246 214L219 187" />
        </svg>
      </button>
      <button type="button" aria-label="Камера" className="ml-10">
        <svg width="40" height="40" viewBox="0 0 40 40" aria-hidden="true">
          <rect x="2" y="3" width="36" height="34" rx="8" fill="currentColor" />
          <circle cx="20" cy="20" r="8.500" fill="none" stroke="#fff" strokeWidth="2.500" />
        </svg>
      </button>
    </div>
    <button type="button" aria-label="Голосовое сообщение" className="flex h-[84px] w-[84px] items-center justify-center rounded-full bg-[#00897b] text-white shadow-[0_2px_4px_rgba(0,0,0,0.3)]">
      <svg width="28" height="38" viewBox="0 0 28 38" fill="none" stroke="currentColor" strokeWidth="3" aria-hidden="true">
        <rect x="8.500" y="1" width="11" height="22" rx="5.500" fill="currentColor" stroke="none" />
        <path d="M2.500 17.500C3 25 8 29 14 29C20 29 25 25 25.500 17.500" />
        <path d="M14 29V37" strokeWidth="3.500" />
      </svg>
    </button>
  </form>
);

const NavBar: React.FC = () => (
  <nav className="flex h-[84px] items-center justify-center gap-[111px] bg-[#fefefe] text-[#636363]">
    <button type="button" aria-label="Недавние">
      <svg width="34" height="34" viewBox="0 0 34 34" fill="currentColor" aria-hidden="true">
        <rect x="6.500" y="6.500" width="21" height="21" rx="1" />
      </svg>
    </button>
    <button type="button" aria-label="Домой">
      <svg width="34" height="34" viewBox="0 0 34 34" fill="currentColor" aria-hidden="true">
        <circle cx="17" cy="17" r="15" fill="none" stroke="currentColor" strokeWidth="2" />
        <circle cx="17" cy="17" r="11.500" />
      </svg>
    </button>
    <button type="button" aria-label="Назад">
      <svg width="34" height="34" viewBox="0 0 34 34" fill="currentColor" aria-hidden="true">
        <path d="M5 16.200L24 5.200Q25 5 25 6V28Q25 29 24 28.500L5 17.800Q4 17 5 16.200Z" />
      </svg>
    </button>
  </nav>
);

const App: React.FC = () => (
  <div className="flex min-h-screen flex-col font-[Roboto,sans-serif]">
    <StatusBar />
    <ChatHeader />
    <main className="relative flex flex-1 flex-col overflow-hidden bg-[linear-gradient(#e9eae6_0%,#eeebe7_14%,#eeebe8_18%,#efe6dd_27%,#efe6dd_80%,#efe3de_92%,#efe3de_100%)]">
      <Wallpaper />
      <div className="relative flex flex-1 flex-col px-[31px]">
        {days.map((day, d) => (
          <section key={d}>
            {day.label && <DateChip label={day.label} />}
            <div className="flex flex-col gap-3.5">
              {day.groups.map((group, g) => (
                <div key={g} className="flex flex-col gap-1">
                  {group.map((m) => <Bubble key={m.text} message={m} />)}
                </div>
              ))}
            </div>
          </section>
        ))}
      </div>
      <Composer />
    </main>
    <NavBar />
  </div>
);

export default App;
